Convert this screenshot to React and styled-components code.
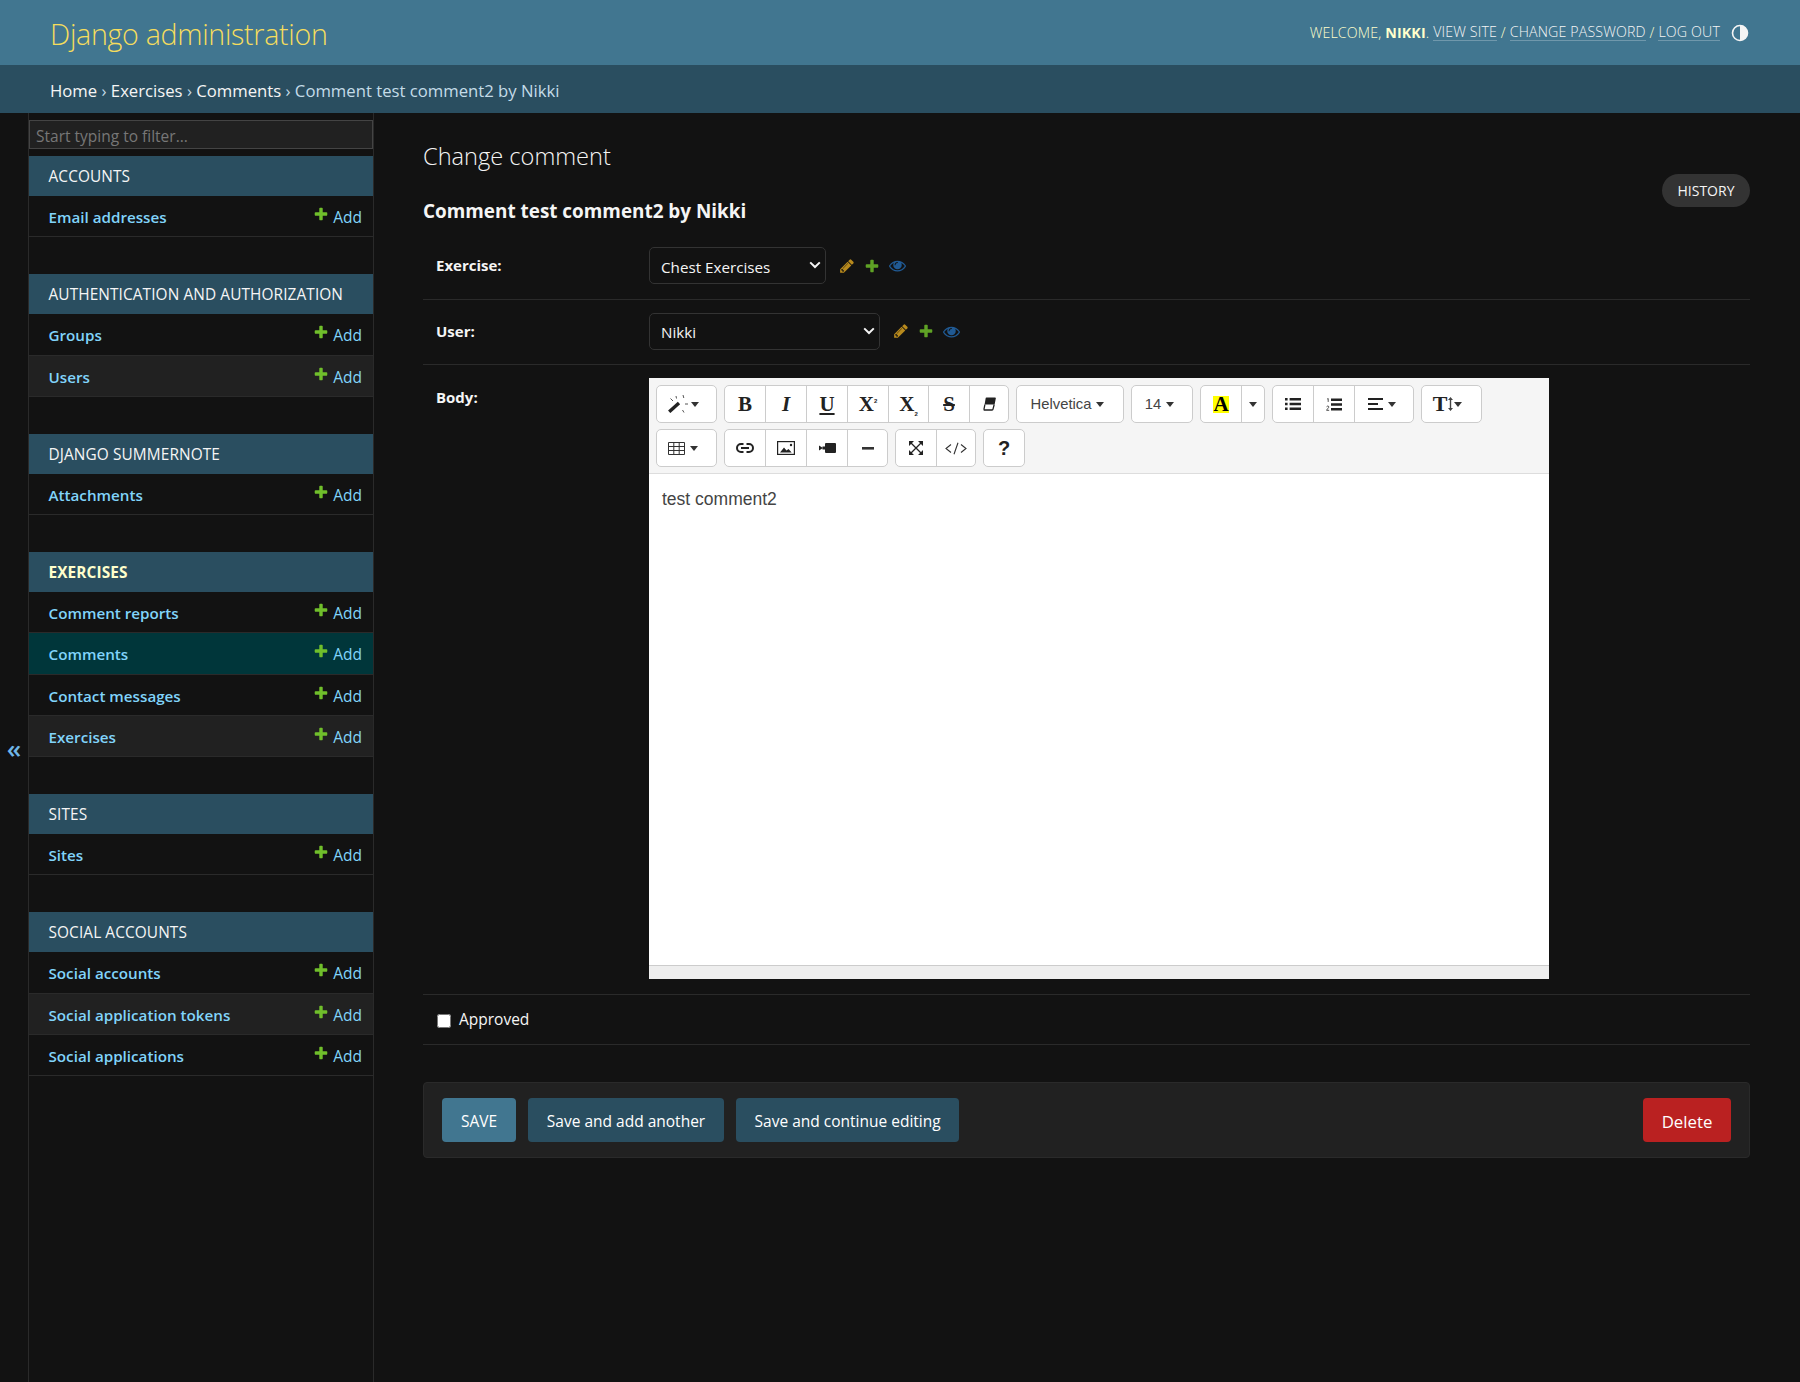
import React from "react";
import styled, { createGlobalStyle } from "styled-components";

const GlobalStyle = createGlobalStyle`
  html, body { margin: 0; padding: 0; background: #121212; }
  body {
    font-family: "Open Sans", "Noto Sans", sans-serif;
    color: #eee;
    font-size: 14px;
  }
`;

const Page = styled.div`
  min-height: 1382px;
  display: flex;
  flex-direction: column;
  overflow: hidden;
`;

const Header = styled.header`
  height: 65px;
  background: #417690;
  display: flex;
  align-items: center;
  justify-content: space-between;
  padding: 0 51px 0 50px;
`;

const Brand = styled.h1`
  margin: 2px 0 0;
  font-size: 28.6px;
  font-weight: 300;
  color: #f5dd5d;
  letter-spacing: -0.3px;
`;

const UserTools = styled.div`
  display: flex;
  align-items: center;
  font-size: 14.2px;
  font-weight: 300;
  color: #ffc;
  text-transform: uppercase;
  letter-spacing: 0.15px;
  white-space: pre;

  strong { font-weight: 700; }
`;

const ToolLink = styled.a`
  color: #f5f5f5;
  border-bottom: 1px solid rgba(255, 255, 255, 0.25);
  line-height: 16px;
`;

const ThemeIcon = styled.svg`
  width: 18px;
  height: 18px;
  margin-left: 11px;
`;

const Breadcrumbs = styled.nav`
  height: 48px;
  box-sizing: border-box;
  padding: 2px 50px 0;
  background: #2a4e60;
  display: flex;
  align-items: center;
  font-size: 16.7px;
  color: #c4dce8;
  white-space: pre;

  a { color: #f5f5f5; }
`;

const Body = styled.div`
  flex: 1;
  display: flex;
`;

const ToggleColumn = styled.div`
  width: 28px;
  flex: none;
  display: flex;
  align-items: center;
  justify-content: center;
  color: #6fb6e8;
  font-size: 26px;
  font-weight: 600;
  padding-bottom: 4px;
  height: 1269px;
`;

const Sidebar = styled.aside`
  width: 344px;
  flex: none;
  border-left: 1px solid #2a2a2a;
  border-right: 1px solid #2a2a2a;
  padding-top: 7px;
`;

const FilterBox = styled.div`
  height: 29px;
  box-sizing: border-box;
  background: #212121;
  border: 1px solid #444;
  padding: 2px 0 0 6px;
  font-size: 15.5px;
  line-height: 27px;
  color: #777;
  margin-bottom: 7px;
`;

const Module = styled.section`
  margin-bottom: 37px;
`;

const Caption = styled.div`
  height: 40px;
  box-sizing: border-box;
  background: #2a4e60;
  display: flex;
  align-items: center;
  padding: 1px 0 0 19.5px;
  font-size: 15.4px;
  letter-spacing: 0.1px;
  color: ${(p) => (p.$active ? "#ffc" : "#f5f5f5")};
  font-weight: ${(p) => (p.$active ? 700 : 400)};
`;

const ModelRow = styled.div`
  height: 40.25px;
  box-sizing: content-box;
  border-bottom: 1px solid #2a2a2a;
  display: flex;
  align-items: center;
  justify-content: space-between;
  padding: 0 11px 0 19.5px;
  background: ${(p) => (p.$selected ? "#00363a" : p.$alt ? "#212121" : "transparent")};
`;

const ModelName = styled.a`
  color: #81d4fa;
  font-weight: 600;
  font-size: 15.2px;
  margin-top: 2px;
`;

const AddLink = styled.a`
  display: flex;
  align-items: center;
  gap: 4px;
  color: #81d4fa;
  font-size: 15.5px;
  margin-top: 2px;
`;

const PlusIcon = styled.svg`
  width: 16px;
  height: 16px;
  fill: #70bf2b;
  margin-top: -6px;
`;

const Main = styled.main`
  flex: 1;
  min-width: 0;
  padding: 0 50px 0 49px;
`;

const TitleBar = styled.div`
  display: flex;
  justify-content: space-between;
  align-items: flex-start;
  margin-bottom: 10px;
`;

const PageTitle = styled.h1`
  margin: 24px 0 0;
  font-size: 23.6px;
  line-height: 38px;
  font-weight: 300;
  color: #f5f5f5;
`;

const ObjectTitle = styled.h2`
  margin: 23px 0 0;
  font-size: 18.9px;
  line-height: 26px;
  font-weight: 700;
  color: #f5f5f5;
`;

const HistoryButton = styled.a`
  margin-top: 61px;
  height: 33px;
  width: 88px;
  border-radius: 17px;
  background: #333;
  color: #f5f5f5;
  display: flex;
  align-items: center;
  justify-content: center;
  font-size: 14px;
`;

const FormRow = styled.div`
  display: flex;
  align-items: flex-start;
  padding: ${(p) => p.$pad || "13px 13px 14.5px"};
  border-bottom: 1px solid #2a2a2a;
`;

const FieldLabel = styled.label`
  width: 213px;
  flex: none;
  font-weight: 700;
  font-size: 15px;
  line-height: 22px;
  color: #f5f5f5;
  margin-top: ${(p) => p.$top || "7px"};
`;

const PickerWrap = styled.div`
  position: relative;
  width: ${(p) => p.$width}px;
  height: 37px;
  flex: none;
`;

const Picker = styled.select`
  appearance: none;
  width: 100%;
  height: 100%;
  box-sizing: border-box;
  background: #121212;
  color: #f5f5f5;
  border: 1px solid #333;
  border-radius: 5px;
  padding: 2px 11px 0;
  font: 400 15.2px "Open Sans", sans-serif;
`;

const Chevron = styled.svg`
  position: absolute;
  right: 5px;
  top: 14px;
  width: 12px;
  height: 8px;
  pointer-events: none;
`;

const RelatedIcons = styled.div`
  display: flex;
  align-items: center;
  gap: 9px;
  margin-left: 13px;
  height: 37px;
`;

const RelatedIcon = styled.svg`
  width: ${(p) => p.$size}px;
  height: ${(p) => p.$size}px;
  fill: ${(p) => p.$color};
`;

const Editor = styled.div`
  width: 900px;
  height: 601px;
  background: #fff;
  display: flex;
  flex-direction: column;
`;

const Toolbar = styled.div`
  height: 96px;
  box-sizing: border-box;
  padding: 7px 0 0 7px;
  background: #f5f5f5;
  border-bottom: 1px solid #ddd;
`;

const ToolRow = styled.div`
  display: flex;
  gap: 7px;
  margin-bottom: 6px;
`;

const ToolGroup = styled.div`
  display: flex;
  height: 38px;
  box-sizing: border-box;
  border: 1px solid #ccc;
  border-radius: 5px;
  background: #fff;
  overflow: hidden;
`;

const ToolButton = styled.div`
  width: ${(p) => p.$w || 40}px;
  box-sizing: border-box;
  display: flex;
  align-items: center;
  justify-content: center;
  gap: ${(p) => p.$gap ?? 3}px;
  padding-right: ${(p) => p.$nudge || 0}px;
  color: #444;
  font-size: 14.8px;
  font-family: "Liberation Sans", Arial, sans-serif;

  & + & { border-left: 1px solid #ccc; }
`;

const SerifGlyph = styled.span`
  font-family: "Liberation Serif", serif;
  font-weight: 700;
  font-style: ${(p) => (p.$italic ? "italic" : "normal")};
  text-decoration: ${(p) => p.$line || "none"};
  font-size: ${(p) => p.$size || 21}px;
  line-height: 1;
  color: #222;

  sup, sub {
    font-size: 6px;
    font-family: "Liberation Sans", sans-serif;
    line-height: 0;
  }
`;

const HighlightGlyph = styled(SerifGlyph)`
  background: #ff0;
  color: #000;
  padding: 0 0.5px;
  line-height: 17px;
`;

const Caret = styled.i`
  width: 0;
  height: 0;
  border: 4px solid transparent;
  border-top: 5px solid #333;
  border-bottom: 0;
`;

const HelpGlyph = styled.span`
  font-family: "Liberation Sans", sans-serif;
  font-weight: 700;
  font-size: 20px;
  color: #222;
`;

const Icon = styled.svg`
  width: ${(p) => p.$w || 18}px;
  height: ${(p) => p.$h || 16}px;
  flex: none;
`;

const EditArea = styled.div`
  flex: 1;
  padding: 13px 13px 0;
  font: 17.5px/24px "Liberation Sans", Arial, sans-serif;
  color: #444;
`;

const StatusBar = styled.div`
  height: 13px;
  background: #eee;
  border-top: 1px solid #ccc;
`;

const CheckLabel = styled.label`
  display: flex;
  align-items: center;
  gap: 8px;
  font-size: 15.5px;
  color: #f5f5f5;
  line-height: 22px;
`;

const CheckBox = styled.input`
  width: 14px;
  height: 14px;
  margin: 4px 0 0 1px;
`;

const SubmitRow = styled.div`
  margin-top: 37px;
  display: flex;
  gap: 12px;
  padding: 15px 18px;
  background: #212121;
  border: 1px solid #2a2a2a;
  border-radius: 4px;
`;

const SubmitButton = styled.a`
  height: 44px;
  box-sizing: border-box;
  padding: 2px ${(p) => p.$pad || 18.7}px 0;
  border-radius: 4px;
  display: flex;
  align-items: center;
  background: ${(p) => p.$bg};
  color: #fff;
  font-size: ${(p) => p.$size || 15.5}px;
  ${(p) => p.$end && "margin-left: auto;"}
`;

const apps = [
  { name: "ACCOUNTS", models: ["Email addresses"] },
  { name: "AUTHENTICATION AND AUTHORIZATION", models: ["Groups", "Users"] },
  { name: "DJANGO SUMMERNOTE", models: ["Attachments"] },
  {
    name: "EXERCISES",
    active: true,
    models: ["Comment reports", "Comments", "Contact messages", "Exercises"],
  },
  { name: "SITES", models: ["Sites"] },
  { name: "SOCIAL ACCOUNTS", models: ["Social accounts", "Social application tokens", "Social applications"] },
];

const plusPath =
  "M1600 796v192q0 40-28 68t-68 28h-416v416q0 40-28 68t-68 28h-192q-40 0-68-28t-28-68v-416h-416q-40 0-68-28t-28-68v-192q0-40 28-68t68-28h416v-416q0-40 28-68t68-28h192q40 0 68 28t28 68v416h416q40 0 68 28t28 68z";
const pencilPath =
  "M491 1536l91-91-235-235-91 91v107h128v128h107zm523-928q0-22-22-22-10 0-17 7l-542 542q-7 7-7 17 0 22 22 22 10 0 17-7l542-542q7-7 7-17zm-54-192l416 416-832 832h-416v-416zm683 96q0 53-37 90l-166 166-416-416 166-165q36-38 90-38 53 0 91 38l235 234q37 39 37 91z";
const eyePath =
  "M1664 960q-152-236-381-353 61 104 61 225 0 185-131.5 316.5t-316.5 131.5-316.5-131.5-131.5-316.5q0-121 61-225-229 117-381 353 133 205 333.5 326.5t434.5 121.5 434.5-121.5 333.5-326.5zm-720-384q0-20-14-34t-34-14q-125 0-214.5 89.5t-89.5 214.5q0 20 14 34t34 14 34-14 14-34q0-86 61-147t147-61q20 0 34-14t14-34zm848 384q0 34-20 69-140 230-376.5 368.5t-499.5 138.5-499.5-139-376.5-368q-20-35-20-69t20-69q140-229 376.5-368t499.5-139 499.5 139 376.5 368q20 35 20 69z";

const Related = () => (
  <RelatedIcons>
    <RelatedIcon viewBox="0 0 1792 1792" $size={16} $color="#b88a1d"><path d={pencilPath} /></RelatedIcon>
    <RelatedIcon viewBox="0 0 1792 1792" $size={16} $color="#5fa225"><path d={plusPath} /></RelatedIcon>
    <RelatedIcon viewBox="0 0 1792 1792" $size={17} $color="#205a94"><path d={eyePath} /></RelatedIcon>
  </RelatedIcons>
);

const SelectField = ({ width, value }) => (
  <PickerWrap $width={width}>
    <Picker defaultValue={value}>
      <option value={value}>{value}</option>
    </Picker>
    <Chevron viewBox="0 0 12 8" fill="none" stroke="#f5f5f5" strokeWidth="2">
      <path d="M1.2 1.4 6 6l4.8-4.6" />
    </Chevron>
  </PickerWrap>
);

const WandIcon = () => (
  <Icon viewBox="0 0 20 18" $w={20} $h={18} fill="none" stroke="#222">
    <path d="M1.2 16.8 11 8" strokeWidth="3.4" />
    <path d="M8 1l.5 2.5M15 0l.8 3M17 9h3M14.5 15l1.5 2.5M2.5 3.5 5 6" strokeWidth="1" stroke="#555" />
  </Icon>
);

const EraserIcon = () => (
  <Icon viewBox="0 0 14 14" $w={14} $h={14}>
    <path d="M4.5.5H13a.8.8 0 0 1 .8 1L12.6 7.5H2.6l1-6a1 1 0 0 1 .9-1z" fill="#222" />
    <path d="M2.9 7.5 2 12.2a.6.6 0 0 0 .6.8H10a1 1 0 0 0 1-.8l1.2-4.7" fill="none" stroke="#222" strokeWidth="1.3" />
  </Icon>
);

const LinkIcon = () => (
  <Icon viewBox="0 0 18 10" $h={10} fill="none" stroke="#222" strokeWidth="2">
    <path d="M7.5 1H5a4 4 0 0 0 0 8h2.5" />
    <path d="M10.5 1H13a4 4 0 0 1 0 8h-2.5" />
    <path d="M5 5h8" strokeWidth="1.8" />
  </Icon>
);

const PictureIcon = () => (
  <Icon viewBox="0 0 18 14" $h={14}>
    <rect x="0.6" y="0.6" width="16.8" height="12.8" fill="none" stroke="#222" strokeWidth="1.2" />
    <path d="M3 11.5l4-5 2.5 3 2-1.5 3.2 3.5z" fill="#222" />
    <circle cx="14" cy="4" r="1.2" fill="#222" />
  </Icon>
);

const VideoIcon = () => (
  <Icon viewBox="0 0 17 10" $w={17} $h={10}>
    <rect x="6" y="0" width="11" height="10" rx="1" fill="#222" />
    <path d="M0 2.5 4 5 0 7.5z" fill="#222" />
    <rect x="3.5" y="3.5" width="3" height="3" fill="#222" />
  </Icon>
);

const MinusIcon = () => (
  <Icon viewBox="0 0 12 3" $w={12} $h={3}>
    <rect width="12" height="2.6" fill="#333" />
  </Icon>
);

const ExpandIcon = () => (
  <Icon viewBox="0 0 14 14" $w={14} $h={14}>
    <path d="M2 2l10 10M12 2 2 12" stroke="#222" strokeWidth="1.3" />
    <path d="M0 0h5L0 5zM14 0H9l5 5zM0 14h5l-5-5zM14 14H9l5-5z" fill="#222" />
  </Icon>
);

const CodeIcon = () => (
  <Icon viewBox="0 0 22 13" $w={22} $h={13} fill="none" stroke="#333" strokeWidth="1.1">
    <path d="M6 2.5 1 6.5l5 4M16 2.5l5 4-5 4M13 .8 9 12.2" />
  </Icon>
);

const ListIcon = () => (
  <Icon viewBox="0 0 16 12" $w={16} $h={12}>
    <path d="M0 0h2.6v2.6H0zM0 4.7h2.6v2.6H0zM0 9.4h2.6V12H0zM4.6 0H16v2.4H4.6zM4.6 4.8H16v2.4H4.6zM4.6 9.6H16V12H4.6z" fill="#222" />
  </Icon>
);

const OrderedIcon = () => (
  <Icon viewBox="0 0 16 13" $w={16} $h={13}>
    <path d="M5 0.5h11v2.4H5zM5 5.3h11v2.4H5zM5 10.1h11v2.4H5z" fill="#222" />
    <path d="M1.2 1 2.2.5v3.4M.6 8.7c.6-1 2.4-.8 2.2.4-.1.7-1.6 1.7-2.2 3.2h2.6" stroke="#222" strokeWidth=".8" fill="none" />
  </Icon>
);

const AlignIcon = () => (
  <Icon viewBox="0 0 15 12" $w={15} $h={12}>
    <path d="M0 0h15v2H0zM0 5h10v2H0zM0 10h15v2H0z" fill="#222" />
  </Icon>
);

const TableIcon = () => (
  <Icon viewBox="0 0 17 13" $w={17} $h={13} fill="none" stroke="#333">
    <path d="M.5.5h16v12H.5zM.5 4.5h16M.5 8.5h16M5.8.5v12M11.2.5v12" />
  </Icon>
);

const HeightIcon = () => (
  <Icon viewBox="0 0 5 14" $w={5} $h={14}>
    <path d="M2.5 0 5 3H3.2v8H5l-2.5 3L0 11h1.8V3H0z" fill="#444" />
  </Icon>
);

const App = () => (
  <Page>
    <GlobalStyle />
    <Header>
      <Brand>Django administration</Brand>
      <UserTools>
        Welcome, <strong>Nikki</strong>. <ToolLink>View site</ToolLink> / <ToolLink>Change password</ToolLink> /{" "}
        <ToolLink>Log out</ToolLink>
        <ThemeIcon viewBox="0 0 18 18">
          <circle cx="9" cy="9" r="7.5" fill="none" stroke="#f5f5f5" strokeWidth="1.6" />
          <path d="M9 1.5a7.5 7.5 0 0 1 0 15z" fill="#f5f5f5" />
        </ThemeIcon>
      </UserTools>
    </Header>
    <Breadcrumbs>
      <a>Home</a> › <a>Exercises</a> › <a>Comments</a> › Comment test comment2 by Nikki
    </Breadcrumbs>
    <Body>
      <ToggleColumn>«</ToggleColumn>
      <Sidebar>
        <FilterBox>Start typing to filter...</FilterBox>
        {apps.map((app) => (
          <Module key={app.name}>
            <Caption $active={app.active}>{app.name}</Caption>
            {app.models.map((model, i) => (
              <ModelRow key={model} $alt={i % 2 === 1} $selected={model === "Comments"}>
                <ModelName>{model}</ModelName>
                <AddLink>
                  <PlusIcon viewBox="0 0 1792 1792"><path d={plusPath} /></PlusIcon>
                  Add
                </AddLink>
              </ModelRow>
            ))}
          </Module>
        ))}
      </Sidebar>
      <Main>
        <TitleBar>
          <div>
            <PageTitle>Change comment</PageTitle>
            <ObjectTitle>Comment test comment2 by Nikki</ObjectTitle>
          </div>
          <HistoryButton>HISTORY</HistoryButton>
        </TitleBar>
        <FormRow>
          <FieldLabel>Exercise:</FieldLabel>
          <SelectField width={177} value="Chest Exercises" />
          <Related />
        </FormRow>
        <FormRow>
          <FieldLabel>User:</FieldLabel>
          <SelectField width={231} value="Nikki" />
          <Related />
        </FormRow>
        <FormRow $pad="13px 13px 15px">
          <FieldLabel $top="8px">Body:</FieldLabel>
          <Editor>
            <Toolbar>
              <ToolRow>
                <ToolGroup>
                  <ToolButton $w={59} $nudge={6}><WandIcon /><Caret /></ToolButton>
                </ToolGroup>
                <ToolGroup>
                  <ToolButton $w={40}><SerifGlyph>B</SerifGlyph></ToolButton>
                  <ToolButton $w={41}><SerifGlyph $italic>I</SerifGlyph></ToolButton>
                  <ToolButton $w={41}><SerifGlyph $line="underline">U</SerifGlyph></ToolButton>
                  <ToolButton $w={41}><SerifGlyph>X<sup>2</sup></SerifGlyph></ToolButton>
                  <ToolButton $w={40}><SerifGlyph>X<sub>2</sub></SerifGlyph></ToolButton>
                  <ToolButton $w={41}><SerifGlyph $line="line-through">S</SerifGlyph></ToolButton>
                  <ToolButton $w={39}><EraserIcon /></ToolButton>
                </ToolGroup>
                <ToolGroup>
                  <ToolButton $w={106} $gap={5} $nudge={5}>Helvetica <Caret /></ToolButton>
                </ToolGroup>
                <ToolGroup>
                  <ToolButton $w={60} $gap={5} $nudge={5}>14 <Caret /></ToolButton>
                </ToolGroup>
                <ToolGroup>
                  <ToolButton $w={40}><HighlightGlyph>A</HighlightGlyph></ToolButton>
                  <ToolButton $w={23}><Caret /></ToolButton>
                </ToolGroup>
                <ToolGroup>
                  <ToolButton $w={40}><ListIcon /></ToolButton>
                  <ToolButton $w={41}><OrderedIcon /></ToolButton>
                  <ToolButton $w={59} $gap={5} $nudge={5}><AlignIcon /><Caret /></ToolButton>
                </ToolGroup>
                <ToolGroup>
                  <ToolButton $w={59} $gap={1} $nudge={8}><SerifGlyph $size={22}>T</SerifGlyph><HeightIcon /><Caret /></ToolButton>
                </ToolGroup>
              </ToolRow>
              <ToolRow>
                <ToolGroup>
                  <ToolButton $w={59} $gap={5} $nudge={7}><TableIcon /><Caret /></ToolButton>
                </ToolGroup>
                <ToolGroup>
                  <ToolButton $w={40}><LinkIcon /></ToolButton>
                  <ToolButton $w={41}><PictureIcon /></ToolButton>
                  <ToolButton $w={41}><VideoIcon /></ToolButton>
                  <ToolButton $w={40}><MinusIcon /></ToolButton>
                </ToolGroup>
                <ToolGroup>
                  <ToolButton $w={40}><ExpandIcon /></ToolButton>
                  <ToolButton $w={39}><CodeIcon /></ToolButton>
                </ToolGroup>
                <ToolGroup>
                  <ToolButton $w={40}><HelpGlyph>?</HelpGlyph></ToolButton>
                </ToolGroup>
              </ToolRow>
            </Toolbar>
            <EditArea>test comment2</EditArea>
            <StatusBar />
          </Editor>
        </FormRow>
        <FormRow $pad="13px 13px 14px">
          <CheckLabel>
            <CheckBox type="checkbox" />
            Approved
          </CheckLabel>
        </FormRow>
        <SubmitRow>
          <SubmitButton $bg="#417690" $pad={19}>SAVE</SubmitButton>
          <SubmitButton $bg="#2a4e60">Save and add another</SubmitButton>
          <SubmitButton $bg="#2a4e60">Save and continue editing</SubmitButton>
          <SubmitButton $bg="#ba2121" $size={16.8} $end>Delete</SubmitButton>
        </SubmitRow>
      </Main>
    </Body>
  </Page>
);

export default App;
